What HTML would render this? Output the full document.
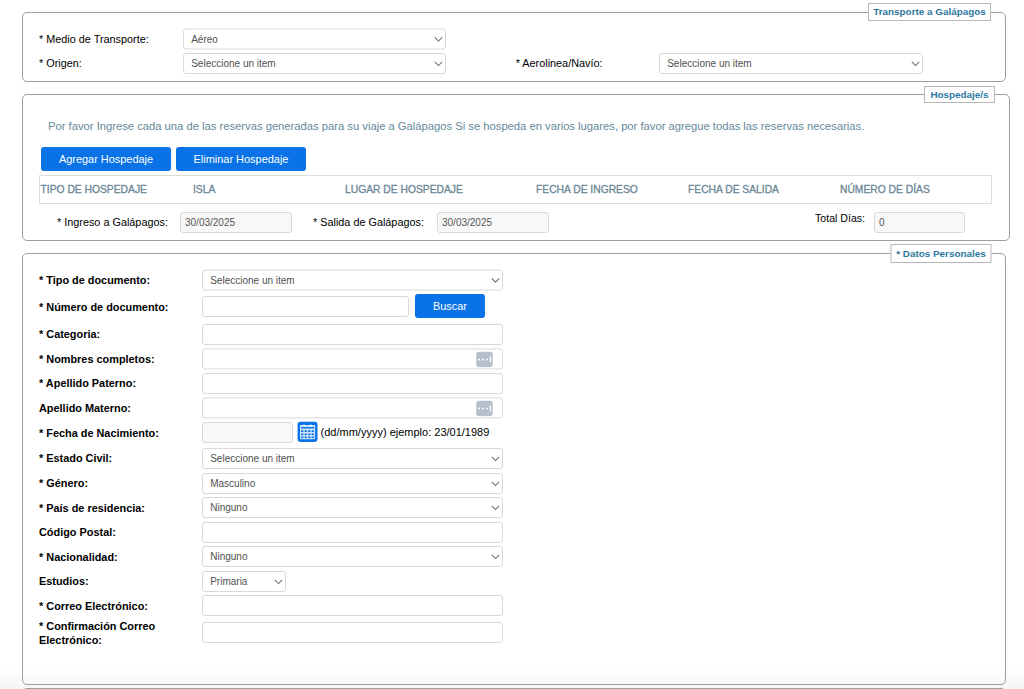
<!DOCTYPE html>
<html lang="es">
<head>
<meta charset="utf-8">
<title>Registro</title>
<style>
html,body{margin:0;padding:0;}
body{width:1024px;height:689px;overflow:hidden;position:relative;background:linear-gradient(#fff 0,#fff 668px,#f5f5f5 689px);font-family:"Liberation Sans",Arial,sans-serif;font-size:11px;color:#000;}
.abs,.fs,.lg,.lb,.in,.sel,.btn,.t{position:absolute;box-sizing:border-box;}
.fs{border:1px solid #9e9e9e;border-radius:5px;}
.lg{background:#fff;border:1px solid #b8b8b8;color:#2c789f;font-weight:bold;font-size:9.9px;height:18px;line-height:16px;text-align:center;white-space:nowrap;}
.lb{white-space:nowrap;font-size:10.85px;line-height:14px;color:#000;}
.lb.b{font-weight:bold;font-size:10.9px;}
.in{border:1px solid #ddd7da;border-radius:3px;background:#fff;height:21px;}
.in.g{background:#f8f8f8;}
.sel{border:1px solid #ddd7da;border-radius:3px;background:#fff;height:21px;font-size:10px;line-height:19px;padding-left:7.2px;color:#505050;white-space:nowrap;}
.sel svg{position:absolute;right:2.2px;top:6.7px;}
.btn{background:#0872e6;color:#fff;border-radius:3px;font-size:10.95px;text-align:center;height:24px;line-height:24px;white-space:nowrap;}
.t{white-space:nowrap;}
.th{color:#6b8797;-webkit-text-stroke:0.3px #6b8797;font-size:10.3px;line-height:14px;}
.val{font-size:10px;color:#555;line-height:19px;padding-left:4px;}
.dots{position:absolute;left:273px;top:1.5px;width:17px;height:16px;}
</style>
</head>
<body>

<!-- Fieldset 1 -->
<div class="fs" style="left:22px;top:12px;width:984px;height:70px;"></div>
<div class="lg" style="left:868px;top:3px;width:123px;">Transporte a Galápagos</div>
<div class="lb" style="left:39px;top:32px;">* Medio de Transporte:</div>
<div class="sel" style="left:183px;top:29px;width:263px;transform:translateY(-0.5px);">Aéreo<svg width="9" height="6" viewBox="0 0 9 6"><path d="M0.8 0.8 L4.5 4.6 L8.2 0.8" fill="none" stroke="#707070" stroke-width="1.05"/></svg></div>
<div class="lb" style="left:39px;top:56px;">* Origen:</div>
<div class="sel" style="left:183px;top:53px;width:263px;">Seleccione un item<svg width="9" height="6" viewBox="0 0 9 6"><path d="M0.8 0.8 L4.5 4.6 L8.2 0.8" fill="none" stroke="#707070" stroke-width="1.05"/></svg></div>
<div class="lb" style="left:515.7px;top:56px;">* Aerolinea/Navío:</div>
<div class="sel" style="left:659px;top:53px;width:264px;">Seleccione un item<svg width="9" height="6" viewBox="0 0 9 6"><path d="M0.8 0.8 L4.5 4.6 L8.2 0.8" fill="none" stroke="#707070" stroke-width="1.05"/></svg></div>

<!-- Fieldset 2 -->
<div class="fs" style="left:22px;top:94px;width:988px;height:147px;"></div>
<div class="lg" style="left:924px;top:86px;width:71px;height:17px;line-height:15px;">Hospedaje/s</div>
<div class="t" style="left:48px;top:120px;transform:translateY(-0.7px);color:#64899b;font-size:11.23px;line-height:14px;">Por favor Ingrese cada una de las reservas generadas para su viaje a Galápagos Si se hospeda en varios lugares, por favor agregue todas las reservas necesarias.</div>
<div class="btn" style="left:41px;top:147px;width:130px;">Agregar Hospedaje</div>
<div class="btn" style="left:176px;top:147px;width:130px;">Eliminar Hospedaje</div>
<div class="abs" style="left:39px;top:175px;width:953px;height:29px;border:1px solid #dcdcdc;background:#fff;"></div>
<div class="t th" style="left:40.5px;top:183px;">TIPO DE HOSPEDAJE</div>
<div class="t th" style="left:193px;top:183px;">ISLA</div>
<div class="t th" style="left:345px;top:183px;">LUGAR DE HOSPEDAJE</div>
<div class="t th" style="left:536px;top:183px;">FECHA DE INGRESO</div>
<div class="t th" style="left:688px;top:183px;">FECHA DE SALIDA</div>
<div class="t th" style="left:840px;top:183px;">NÚMERO DE DÍAS</div>
<div class="lb" style="left:57px;top:215px;">* Ingreso a Galápagos:</div>
<div class="in g val" style="left:180px;top:212px;width:112px;">30/03/2025</div>
<div class="lb" style="left:313px;top:215px;">* Salida de Galápagos:</div>
<div class="in g val" style="left:437px;top:212px;width:112px;">30/03/2025</div>
<div class="lb" style="left:815px;top:211px;font-size:10.6px;">Total Días:</div>
<div class="in g val" style="left:874px;top:212px;width:91px;">0</div>

<!-- Fieldset 3 -->
<div class="fs" style="left:22px;top:253px;width:984px;height:432px;"></div>
<div class="lg" style="left:890px;top:244px;width:101px;height:19px;line-height:17px;transform:translateX(0.5px);">* Datos Personales</div>


<div class="lb b" style="left:39px;top:273px;">* Tipo de documento:</div>
<div class="sel" style="left:202px;top:270px;width:301px;transform:translateY(-0.4px);">Seleccione un item<svg width="9" height="6" viewBox="0 0 9 6"><path d="M0.8 0.8 L4.5 4.6 L8.2 0.8" fill="none" stroke="#707070" stroke-width="1.05"/></svg></div>
<div class="lb b" style="left:39px;top:300px;">* Número de documento:</div>
<div class="in" style="left:202px;top:296px;width:207px;height:21px;"></div>
<div class="btn" style="left:415px;top:294px;width:70px;">Buscar</div>
<div class="lb b" style="left:39px;top:327px;">* Categoria:</div>
<div class="in" style="left:202px;top:324px;width:301px;"></div>
<div class="lb b" style="left:39px;top:352px;">* Nombres completos:</div>
<div class="in" style="left:202px;top:348px;width:301px;transform:translateY(0.4px);"><svg class="dots" viewBox="0 0 17 16"><rect x="0.3" y="0.2" width="16.4" height="15.6" rx="3" fill="#b7bfcd"/><circle cx="3" cy="8" r="1" fill="#fff"/><circle cx="7" cy="8" r="1" fill="#fff"/><circle cx="11" cy="8" r="1" fill="#fff"/><rect x="13.8" y="4.9" width="1.2" height="6.2" fill="#fff"/></svg></div>
<div class="lb b" style="left:39px;top:376px;">* Apellido Paterno:</div>
<div class="in" style="left:202px;top:373px;width:301px;"></div>
<div class="lb b" style="left:39px;top:401px;">Apellido Materno:</div>
<div class="in" style="left:202px;top:397px;width:301px;transform:translateY(0.4px);"><svg class="dots" viewBox="0 0 17 16"><rect x="0.3" y="0.2" width="16.4" height="15.6" rx="3" fill="#b7bfcd"/><circle cx="3" cy="8" r="1" fill="#fff"/><circle cx="7" cy="8" r="1" fill="#fff"/><circle cx="11" cy="8" r="1" fill="#fff"/><rect x="13.8" y="4.9" width="1.2" height="6.2" fill="#fff"/></svg></div>
<div class="lb b" style="left:39px;top:426px;">* Fecha de Nacimiento:</div>
<div class="in g" style="left:202px;top:422px;width:91px;"></div>
<svg class="abs" style="left:297px;top:421px;" width="21" height="21" viewBox="0 0 21 21"><rect x="0.6" y="0.8" width="19.9" height="20.1" rx="2.8" fill="#0a73e7"/><rect x="3" y="3.9" width="15.1" height="14.4" rx="0.8" fill="#cfe3fa"/><circle cx="6.9" cy="4.9" r="1.3" fill="#e4effc"/><circle cx="13.7" cy="4.9" r="1.3" fill="#e4effc"/><rect x="4" y="6" width="13.1" height="1.5" fill="#0a73e7"/><g fill="#0a73e7"><rect x="4.1" y="9.3" width="2.3" height="1.7"/><rect x="7.6" y="9.3" width="2.3" height="1.7"/><rect x="11.1" y="9.3" width="2.3" height="1.7"/><rect x="14.6" y="9.3" width="2.3" height="1.7"/><rect x="4.1" y="12.5" width="2.3" height="1.7"/><rect x="7.6" y="12.5" width="2.3" height="1.7"/><rect x="11.1" y="12.5" width="2.3" height="1.7"/><rect x="14.6" y="12.5" width="2.3" height="1.7"/><rect x="4.1" y="15.6" width="2.3" height="1.5"/><rect x="7.6" y="15.6" width="2.3" height="1.5"/><rect x="11.1" y="15.6" width="2.3" height="1.5"/><rect x="14.6" y="15.6" width="2.3" height="1.5"/></g></svg>
<div class="lb" style="left:320.6px;top:425px;font-size:11px;">(dd/mm/yyyy) ejemplo: 23/01/1989</div>
<div class="lb b" style="left:39px;top:451px;">* Estado Civil:</div>
<div class="sel" style="left:202px;top:448px;width:301px;">Seleccione un item<svg width="9" height="6" viewBox="0 0 9 6"><path d="M0.8 0.8 L4.5 4.6 L8.2 0.8" fill="none" stroke="#707070" stroke-width="1.05"/></svg></div>
<div class="lb b" style="left:39px;top:476px;">* Género:</div>
<div class="sel" style="left:202px;top:473px;width:301px;">Masculino<svg width="9" height="6" viewBox="0 0 9 6"><path d="M0.8 0.8 L4.5 4.6 L8.2 0.8" fill="none" stroke="#707070" stroke-width="1.05"/></svg></div>
<div class="lb b" style="left:39px;top:501px;">* País de residencia:</div>
<div class="sel" style="left:202px;top:497px;width:301px;">Ninguno<svg width="9" height="6" viewBox="0 0 9 6"><path d="M0.8 0.8 L4.5 4.6 L8.2 0.8" fill="none" stroke="#707070" stroke-width="1.05"/></svg></div>
<div class="lb b" style="left:39px;top:525px;">Código Postal:</div>
<div class="in" style="left:202px;top:522px;width:301px;"></div>
<div class="lb b" style="left:39px;top:550px;">* Nacionalidad:</div>
<div class="sel" style="left:202px;top:546px;width:301px;">Ninguno<svg width="9" height="6" viewBox="0 0 9 6"><path d="M0.8 0.8 L4.5 4.6 L8.2 0.8" fill="none" stroke="#707070" stroke-width="1.05"/></svg></div>
<div class="lb b" style="left:39px;top:574px;">Estudios:</div>
<div class="sel" style="left:202px;top:571px;width:84px;">Primaria<svg width="9" height="6" viewBox="0 0 9 6"><path d="M0.8 0.8 L4.5 4.6 L8.2 0.8" fill="none" stroke="#707070" stroke-width="1.05"/></svg></div>
<div class="lb b" style="left:39px;top:599px;">* Correo Electrónico:</div>
<div class="in" style="left:202px;top:595px;width:301px;"></div>
<div class="lb b" style="left:39px;top:620px;line-height:13.5px;">* Confirmación Correo<br>Electrónico:</div>
<div class="in" style="left:202px;top:622px;width:301px;"></div>

<div class="fs" style="left:22px;top:688px;width:984px;height:40px;"></div>
</body>
</html>
